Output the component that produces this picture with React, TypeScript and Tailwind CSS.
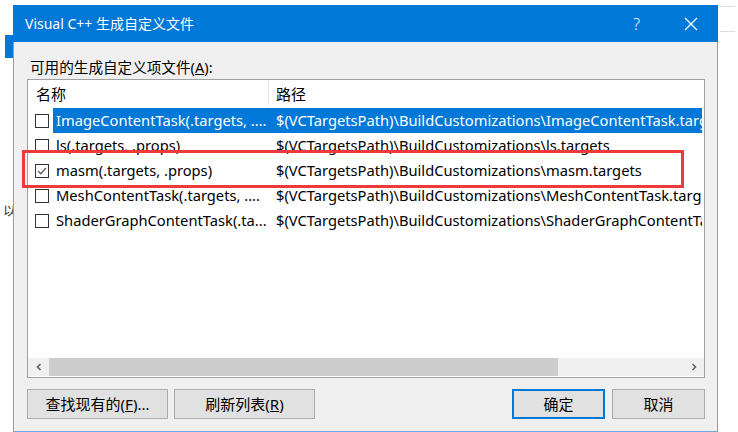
import React from 'react';

const rows = [
    { name: 'ImageContentTask(.targets, ....', path: '$(VCTargetsPath)\\BuildCustomizations\\ImageContentTask.targets', checked: false, selected: true },
    { name: 'ls(.targets, .props)', path: '$(VCTargetsPath)\\BuildCustomizations\\ls.targets', checked: false, selected: false },
    { name: 'masm(.targets, .props)', path: '$(VCTargetsPath)\\BuildCustomizations\\masm.targets', checked: true, selected: false },
    { name: 'MeshContentTask(.targets, ....', path: '$(VCTargetsPath)\\BuildCustomizations\\MeshContentTask.targets', checked: false, selected: false },
    { name: 'ShaderGraphContentTask(.ta...', path: '$(VCTargetsPath)\\BuildCustomizations\\ShaderGraphContentTask.targets', checked: false, selected: false },
];

const CheckBox: React.FC<{ checked: boolean }> = ({ checked }) => (
    <div className="w-[14px] h-[14px] border border-[#333333] bg-white flex items-center justify-center shrink-0">
        {checked && (
            <svg width="12" height="12" viewBox="0 0 12 12">
                <path d="M2 6 L4.8 8.8 L10 3" fill="none" stroke="#5a5a5a" strokeWidth="1.3" />
            </svg>
        )}
    </div>
);

const Button: React.FC<{ className?: string; children: React.ReactNode }> = ({ className = '', children }) => (
    <div className={`h-[30px] bg-[#e1e1e1] flex items-center justify-center text-[15px] text-black ${className}`}>
        {children}
    </div>
);

export default function App() {
    return (
        <div className="w-[738px] h-[432px] bg-white flex overflow-hidden font-['Noto_Sans','Noto_Sans_CJK_SC',sans-serif] relative">
            {/* bits of the window behind */}
            <div className="w-[13px] shrink-0 flex flex-col overflow-hidden">
                <div className="h-[35px]" />
                <div className="ml-[5px] w-[8px] h-[23px] bg-[#0078d7]" />
                <div className="h-[144px]" />
                <div className="ml-[3px] text-[13px] leading-[16px] text-[#333] whitespace-nowrap">以</div>
            </div>

            <div className="mt-[5px] w-[705px] h-[427px] shrink-0 flex flex-col bg-[#f0f0f0] border-x border-b border-[#6ea8e2]">
                {/* title bar */}
                <div className="h-[37px] bg-[#0078d7] -mx-px flex items-center text-white text-[14px]">
                    <span className="ml-[12px] mt-[-1px]">Visual C++ 生成自定义文件</span>
                    <span className="ml-auto mr-[44px] text-[16px] font-light">?</span>
                    <svg width="14" height="14" viewBox="0 0 14 14" className="mr-[20px]">
                        <path d="M1 1 L13 13 M13 1 L1 13" stroke="white" strokeWidth="1.3" />
                    </svg>
                </div>

                {/* body */}
                <div className="flex-1 flex flex-col pl-[13px] pr-[12px]">
                    <div className="mt-[16px] ml-[3px] h-[18px] leading-[18px] text-[14.6px] text-black">
                        可用的生成自定义项文件(<span className="underline">A</span>):
                    </div>

                    <div className="mt-[3px] h-[299px] bg-white border border-[#a0a0a0] flex flex-col overflow-hidden">
                        <div className="h-[28px] flex items-center text-[15px] text-black shrink-0">
                            <div className="w-[240px] pl-[8px]">名称</div>
                            <div className="w-px h-[25px] self-start bg-[#e5e5e5]" />
                            <div className="pl-[7px]">路径</div>
                        </div>
                        <div className="flex-1 flex flex-col">
                            {rows.map((r) => (
                                <div key={r.name} className="h-[25px] flex items-center text-[14.7px]">
                                    <div className="w-[25px] pl-[7px] shrink-0">
                                        <CheckBox checked={r.checked} />
                                    </div>
                                    <div className={`flex-1 mr-[2px] h-full flex items-center overflow-hidden whitespace-nowrap ${r.selected ? 'bg-[#0078d7] text-white' : 'text-black'}`}>
                                        <div className="w-[216px] pl-[3px] shrink-0 overflow-hidden">{r.name}</div>
                                        <div className="pl-[7px]">{r.path}</div>
                                    </div>
                                </div>
                            ))}
                        </div>
                        <div className="h-[18px] mb-px bg-[#f0f0f0] flex shrink-0">
                            <div className="w-[21px] flex items-center justify-center">
                                <svg width="8" height="8" viewBox="0 0 8 8">
                                    <path d="M5.5 1 L2.5 4 L5.5 7" fill="none" stroke="#606060" strokeWidth="1.6" />
                                </svg>
                            </div>
                            <div className="w-[509px] bg-[#cdcdcd]" />
                            <div className="flex-1" />
                            <div className="w-[21px] flex items-center justify-center">
                                <svg width="8" height="8" viewBox="0 0 8 8">
                                    <path d="M2.5 1 L5.5 4 L2.5 7" fill="none" stroke="#606060" strokeWidth="1.6" />
                                </svg>
                            </div>
                        </div>
                    </div>

                    <div className="mt-[11px] flex">
                        <Button className="w-[141px] border border-[#adadad]">
                            查找现有的(<span className="underline">F</span>)...
                        </Button>
                        <Button className="ml-[6px] w-[141px] border border-[#adadad]">
                            刷新列表(<span className="underline">R</span>)
                        </Button>
                        <Button className="ml-auto w-[93px] border-2 border-[#0078d7]">确定</Button>
                        <Button className="ml-[7px] w-[93px] border border-[#adadad]">取消</Button>
                    </div>
                </div>
            </div>

            <div className="flex-1 flex flex-col pl-[2px] pr-[3px]">
                <div className="mt-[6px] h-px bg-[#dcdcdc]" />
                <div className="mt-[24px] h-px bg-[#dcdcdc]" />
            </div>

            {/* red annotation box */}
            <div className="absolute left-[22px] top-[150px] w-[662px] h-[38px] border-[3px] border-[#ee3a3a] pointer-events-none" />
        </div>
    );
}
